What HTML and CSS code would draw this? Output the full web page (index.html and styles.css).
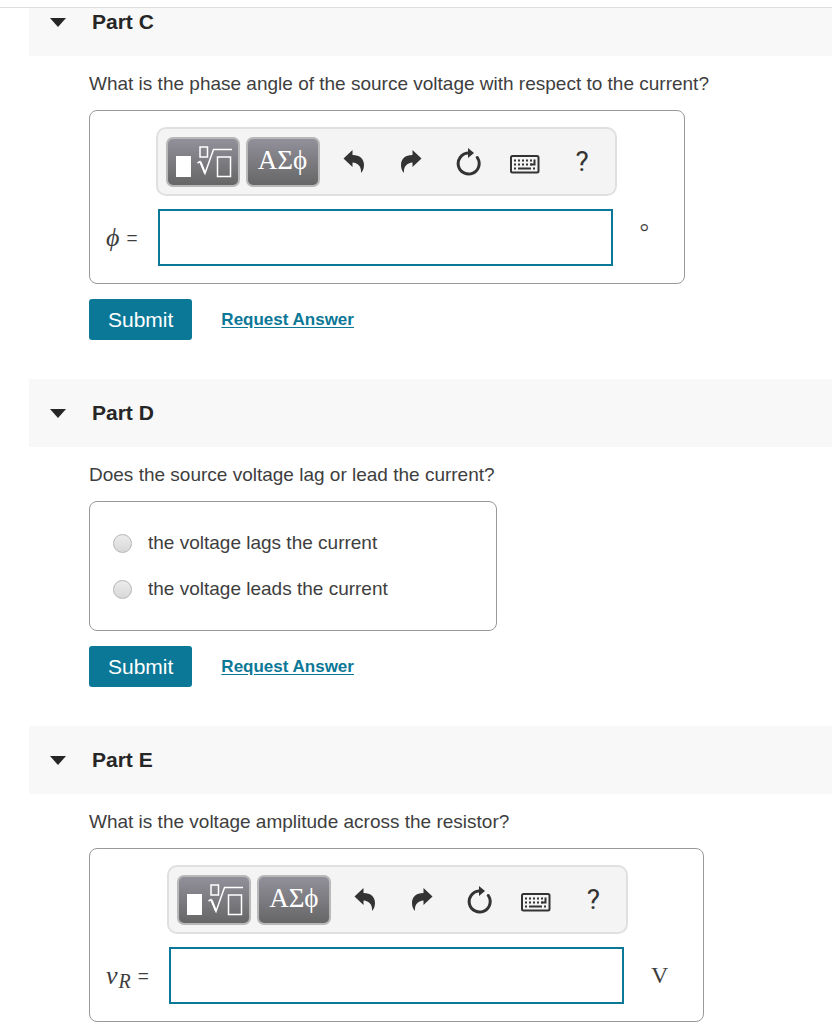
FILE: index.html
```html
<!DOCTYPE html>
<html lang="en">
<head>
  <meta charset="UTF-8">
  <meta name="viewport" content="width=device-width, initial-scale=1">
  <title>Problem</title>
  <link rel="stylesheet" href="styles.css">
</head>
<body>

  <!-- icons shared by both answer toolbars -->
  <svg class="sprite" aria-hidden="true">
    <symbol id="icon-template" viewBox="0 0 56 34">
      <path d="M0 11h15v21H0z" fill="#fff"/>
      <path d="M24 2h7.500v10H24zM41.500 12h13v19.500h-13z" fill="none" stroke="#fff" stroke-width="1.500"/>
      <path d="M21.500 18l2.500-1.500 5 12L37.500 4.500H56" fill="none" stroke="#fff" stroke-width="1.500"/>
      <path d="M24.500 17l4.500 11" stroke="#fff" stroke-width="2"/>
    </symbol>
    <symbol id="icon-undo" viewBox="0 0 22 26">
      <path d="M.5 9.500L9.500 1v5c7.500 0 11.500 4 11.500 10 0 3-1 5.500-2.500 7.500h-.5C18.500 17.500 15 14 9.500 13.500v4.500z"/>
    </symbol>
    <symbol id="icon-redo" viewBox="0 0 22 26">
      <path d="M21.500 9.500L12.500 1v5C5 6 1 10 1 16c0 3 1 5.500 2.500 7.500h.5C3.500 17.500 7 14 12.500 13.500v4.500z"/>
    </symbol>
    <symbol id="icon-reset" viewBox="0 0 26 28">
      <path d="M22.300 9.500A10.500 10.500 0 1 1 13 5" fill="none" stroke="currentColor" stroke-width="3" stroke-linecap="round"/>
      <path d="M13 0l6 5-6 5z"/>
    </symbol>
    <symbol id="icon-keyboard" viewBox="0 0 30 19">
      <rect x="1" y="1" width="27.500" height="16.500" rx="1.500" fill="none" stroke="currentColor" stroke-width="2"/>
      <path d="M4 5.500h18M4 9.500h18" fill="none" stroke="currentColor" stroke-width="2" stroke-dasharray="2 2"/>
      <path d="M4 13.500h2M8 13.500h13M23 13.500h2M24.500 4.500v5h-4" fill="none" stroke="currentColor" stroke-width="2"/>
    </symbol>
  </svg>

  <div class="topbar"></div>

  <main class="parts">

    <section class="part">
      <h2 class="part-header">
        <button type="button" class="part-toggle"><span class="caret"></span>Part C</button>
      </h2>
      <form class="part-body">
        <p class="question">What is the phase angle of the source voltage with respect to the current?</p>
        <div class="answer-box">
          <div class="toolbar">
            <button type="button" class="tool-dark" aria-label="Templates"><svg width="56" height="34"><use href="#icon-template"/></svg></button>
            <button type="button" class="tool-dark tool-greek">ΑΣϕ</button>
            <button type="button" class="tool" aria-label="Undo"><svg width="22" height="26"><use href="#icon-undo"/></svg></button>
            <button type="button" class="tool" aria-label="Redo"><svg width="22" height="26"><use href="#icon-redo"/></svg></button>
            <button type="button" class="tool" aria-label="Reset"><svg width="26" height="28"><use href="#icon-reset"/></svg></button>
            <button type="button" class="tool tool-keyboard" aria-label="Keyboard"><svg width="30" height="19"><use href="#icon-keyboard"/></svg></button>
            <button type="button" class="tool">?</button>
          </div>
          <label class="symbol" for="answer-c"><i>ϕ</i><span>=</span></label>
          <input class="answer" id="answer-c" type="text">
          <span class="unit unit-degree">°</span>
        </div>
        <div class="actions">
          <button type="button" class="submit">Submit</button>
          <a class="request" href="#">Request Answer</a>
        </div>
      </form>
    </section>

    <section class="part">
      <h2 class="part-header">
        <button type="button" class="part-toggle"><span class="caret"></span>Part D</button>
      </h2>
      <form class="part-body">
        <p class="question">Does the source voltage lag or lead the current?</p>
        <div class="choices">
          <label class="choice"><input type="radio" name="part-d">the voltage lags the current</label>
          <label class="choice"><input type="radio" name="part-d">the voltage leads the current</label>
        </div>
        <div class="actions">
          <button type="button" class="submit">Submit</button>
          <a class="request" href="#">Request Answer</a>
        </div>
      </form>
    </section>

    <section class="part">
      <h2 class="part-header">
        <button type="button" class="part-toggle"><span class="caret"></span>Part E</button>
      </h2>
      <form class="part-body">
        <p class="question">What is the voltage amplitude across the resistor?</p>
        <div class="answer-box">
          <div class="toolbar">
            <button type="button" class="tool-dark" aria-label="Templates"><svg width="56" height="34"><use href="#icon-template"/></svg></button>
            <button type="button" class="tool-dark tool-greek">ΑΣϕ</button>
            <button type="button" class="tool" aria-label="Undo"><svg width="22" height="26"><use href="#icon-undo"/></svg></button>
            <button type="button" class="tool" aria-label="Redo"><svg width="22" height="26"><use href="#icon-redo"/></svg></button>
            <button type="button" class="tool" aria-label="Reset"><svg width="26" height="28"><use href="#icon-reset"/></svg></button>
            <button type="button" class="tool tool-keyboard" aria-label="Keyboard"><svg width="30" height="19"><use href="#icon-keyboard"/></svg></button>
            <button type="button" class="tool">?</button>
          </div>
          <label class="symbol" for="answer-e"><i>v<sub>R</sub></i><span>=</span></label>
          <input class="answer" id="answer-e" type="text">
          <span class="unit">V</span>
        </div>
      </form>
    </section>

  </main>

</body>
</html>
```

FILE: styles.css
```css
* {
  box-sizing: border-box;
}

body {
  margin: 0;
  background: #fff;
  color: #3e3e3e;
  font-family: "Liberation Sans", Arial, sans-serif;
  font-size: 19px;
}

button,
input {
  margin: 0;
  font-family: inherit;
}

.sprite {
  display: none;
}

.topbar {
  position: relative;
  z-index: 1;
  height: 8px;
  background: #fff;
  border-bottom: 1px solid #ddd;
}

.parts {
  margin-top: -20px;
  padding-left: 29px;
}

.part-header {
  margin: 0;
  background: #f8f8f8;
}

.part-toggle {
  display: flex;
  align-items: center;
  width: 100%;
  height: 68px;
  padding: 0 21px;
  gap: 26px;
  border: 0;
  background: none;
  color: #262626;
  font-size: 21px;
  font-weight: bold;
}

.caret {
  border: 8px solid transparent;
  border-top: 9px solid #262626;
  border-bottom: 0;
}

.part-body {
  padding-left: 60px;
}

.question {
  margin: 0;
  padding-top: 2px;
  line-height: 52px;
}

.answer-box {
  display: grid;
  grid-template-columns: auto 461px auto;
  row-gap: 13px;
  width: fit-content;
  padding: 16px 35px 17px 16px;
  border: 1px solid #999;
  border-radius: 8px;
}

.toolbar {
  grid-column: 2;
  display: flex;
  align-items: center;
  height: 69px;
  padding-left: 8px;
  border: 2px solid #e0e0e0;
  border-radius: 10px;
  background: #f4f4f4;
}

.tool-dark {
  display: flex;
  align-items: center;
  justify-content: center;
  width: 74px;
  height: 50px;
  margin-right: 6px;
  padding: 0 0 0 2px;
  border: 2px solid #b8b8b8;
  border-radius: 7px;
  background: linear-gradient(#94929c, #646464) border-box;
  color: #fff;
}

.tool-greek {
  padding: 0 0 3px;
  font-family: "Liberation Serif", "DejaVu Serif", serif;
  font-size: 27px;
}

.tool {
  display: flex;
  align-items: center;
  justify-content: center;
  width: 57px;
  height: 50px;
  padding: 0;
  border: 0;
  background: none;
  color: #333;
  fill: currentColor;
  font-family: Roboto, sans-serif;
  font-size: 28px;
}

.tool-keyboard {
  padding-top: 6px;
}

.symbol {
  grid-column: 1;
  display: flex;
  align-items: center;
  align-self: center;
  gap: 7px;
  padding-right: 18px;
}

.symbol i {
  font-family: "Liberation Serif", "DejaVu Serif", serif;
  font-size: 26px;
  line-height: 32px;
}

.symbol sub {
  margin-left: 1px;
  font-size: 20px;
  line-height: 1;
  vertical-align: -4px;
}

.answer {
  height: 57px;
  margin: 0 4px 0 2px;
  padding: 0 12px;
  border: 2px solid #0b7897;
  background: #fff;
  font-size: 19px;
}

.unit {
  align-self: center;
  padding-left: 23px;
  font-family: "Liberation Serif", serif;
  font-size: 24px;
}

.unit-degree {
  padding-bottom: 10px;
}

.choices {
  width: fit-content;
  padding: 18px 108px 18px 23px;
  border: 1px solid #999;
  border-radius: 8px;
}

.choice {
  display: flex;
  align-items: center;
  height: 46px;
  gap: 16px;
}

.choice input {
  appearance: none;
  width: 19px;
  height: 19px;
  border: 1px solid #b5b5b5;
  border-radius: 50%;
  background: linear-gradient(#ececec, #d8d8d8);
}

.actions {
  display: flex;
  align-items: center;
  gap: 29px;
  padding: 15px 0 39px;
}

.submit {
  height: 41px;
  padding: 0 19px;
  border: 0;
  border-radius: 3px;
  background: #0b7897;
  color: #fff;
  font-size: 21px;
}

.request {
  color: #0b7897;
  font-size: 17px;
  font-weight: bold;
  text-underline-offset: 2px;
}
```
